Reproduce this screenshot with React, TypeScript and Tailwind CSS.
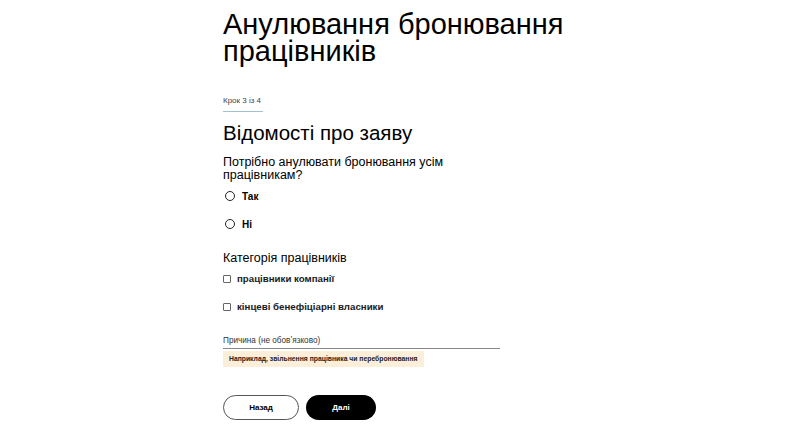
import React from "react";

const font = { fontFamily: '"Liberation Sans", Arial, sans-serif' };

const Radio = ({ label }: { label: string }) => (
  <label className="flex items-center gap-[7px] h-[14px]">
    <span className="w-[10px] h-[10px] rounded-full border-[1.5px] border-[#222] ml-[2px]" />
    <span className="text-[10px] font-bold text-black">{label}</span>
  </label>
);

const Checkbox = ({ label }: { label: string }) => (
  <label className="flex items-center gap-[6px] h-[14px]">
    <span className="w-[8px] h-[8px] border border-[#666] rounded-[1px]" />
    <span className="text-[9.7px] font-bold text-[#1a1a1a]">{label}</span>
  </label>
);

export default function App() {
  return (
    <div className="w-[791px] h-[433px] bg-white overflow-hidden" style={font}>
      <div className="ml-[223px] w-[360px] pt-[11px]">
        <h1 className="text-[29px] leading-[27px] text-black">
          Анулювання бронювання працівників
        </h1>

        <div className="mt-[30px] text-[8px] leading-[12px] text-[#444]">Крок 3 із 4</div>
        <div className="mt-[4px] w-[40px] h-px bg-[#9fc3cf]" />

        <h2 className="mt-[10px] text-[20.5px] leading-[22px] text-black">Відомості про заяву</h2>

        <p className="mt-[12px] text-[12.5px] leading-[13px] text-black font-medium w-[260px]">
          Потрібно анулювати бронювання усім працівникам?
        </p>

        <div className="mt-[7px] flex flex-col gap-[14px]">
          <Radio label="Так" />
          <Radio label="Ні" />
        </div>

        <h3 className="mt-[20px] text-[12.5px] leading-[14px] text-black">Категорія працівників</h3>

        <div className="mt-[7px] flex flex-col gap-[14px]">
          <Checkbox label="працівники компанії" />
          <Checkbox label="кінцеві бенефіціарні власники" />
        </div>

        <div className="mt-[22px] w-[277px] border-b border-[#888] pb-[2px] text-[8.2px] leading-[10px] text-[#333]">
          Причина (не обовʼязково)
        </div>
        <div className="mt-[2px] flex w-fit items-center h-[16px] px-[6px] bg-[#fbefd9] text-[6.8px] font-bold text-[#222]">
          Наприклад, звільнення працівника чи перебронювання
        </div>

        <div className="mt-[28px] flex gap-[7px]">
          <button className="w-[76px] h-[25px] rounded-full border border-[#555] text-[8px] font-bold text-black bg-white">
            Назад
          </button>
          <button className="w-[70px] h-[25px] rounded-full bg-black text-[8px] font-bold text-white">
            Далі
          </button>
        </div>
      </div>
    </div>
  );
}
